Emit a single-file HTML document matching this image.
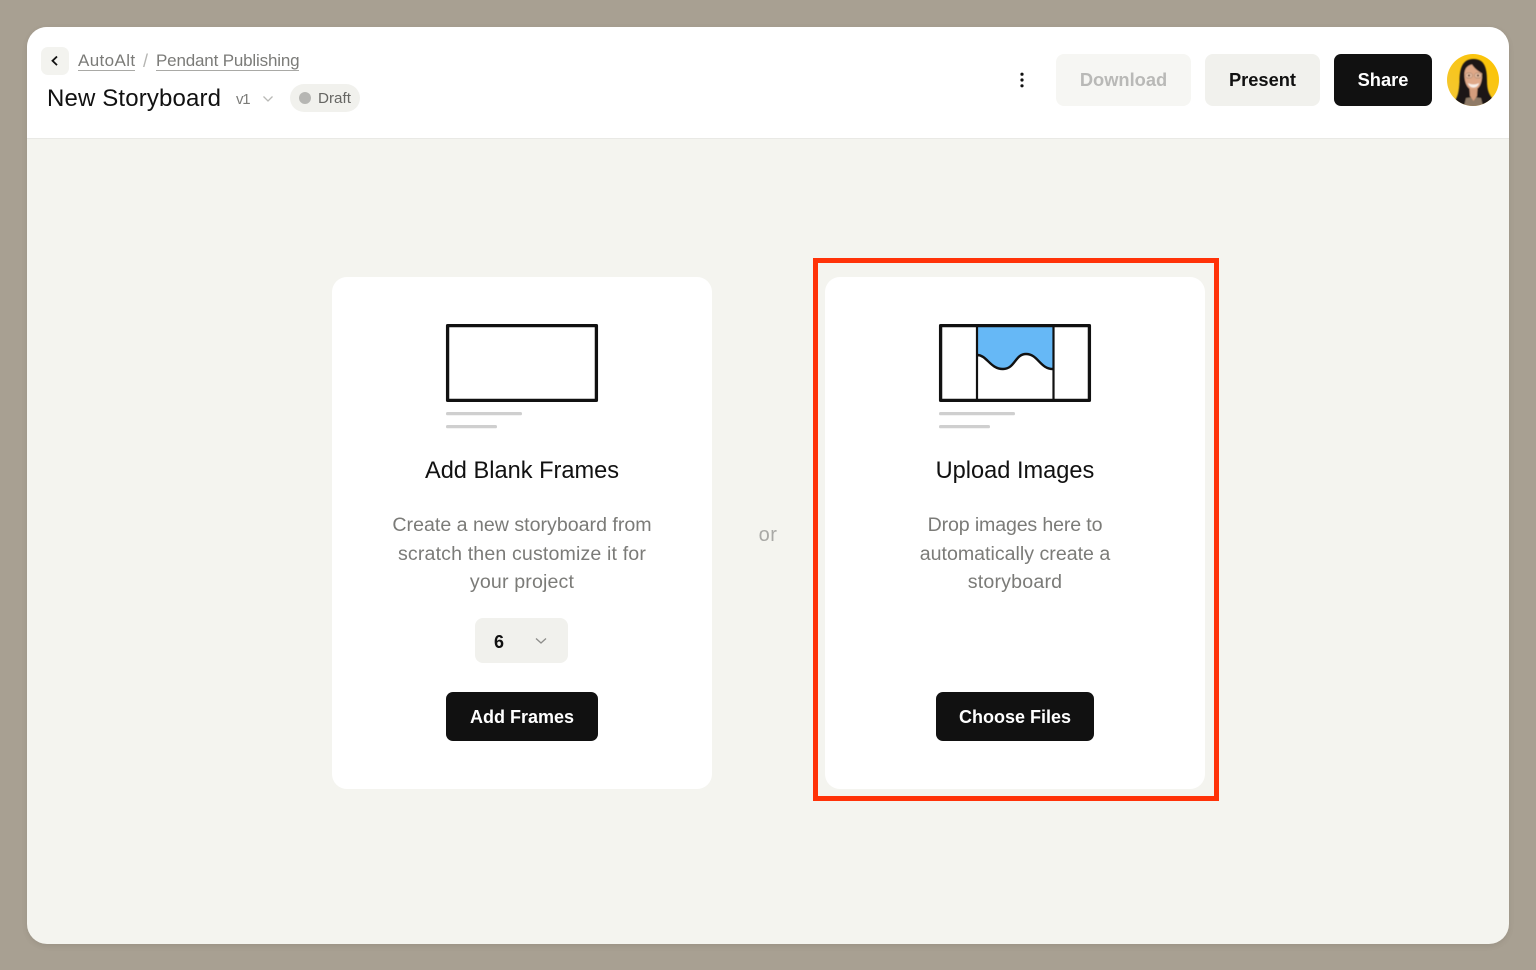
<!DOCTYPE html>
<html lang="en">
<head>
<meta charset="utf-8">
<title>New Storyboard</title>
<style>
html,body{margin:0;padding:0;width:1536px;height:970px;overflow:hidden;background:#a8a092;font-family:"Liberation Sans",sans-serif;}
*{box-sizing:border-box;}
.abs{position:absolute;}
.win{position:absolute;left:27px;top:27px;width:1482px;height:917px;background:#f4f4ef;border-radius:20px;overflow:hidden;box-shadow:0 2px 6px rgba(60,50,40,.12);}
.t{position:absolute;white-space:nowrap;line-height:1;}
.btn{position:absolute;display:flex;align-items:center;justify-content:center;font-weight:700;font-size:18.3px;white-space:nowrap;}
.dark{background:#111;color:#fff;border-radius:7px;}
.card{position:absolute;top:277px;width:380px;height:512px;background:#fff;border-radius:15px;}
.ctr{position:absolute;text-align:center;white-space:nowrap;left:0;width:380px;}
.title{font-size:23.6px;line-height:26px;color:#111;}
.desc{font-size:19.6px;color:#7b7b78;}
.desc div{position:absolute;left:0;width:380px;line-height:28px;}
a{color:inherit;text-decoration:none;border-bottom:1px solid #a9a9a6;}
</style>
</head>
<body>
<div class="win"></div>
<div class="abs" style="left:27px;top:27px;width:1482px;height:112px;background:#fff;border-bottom:1px solid #e9e9e5;border-radius:20px 20px 0 0;"></div>

<div class="abs" style="left:41px;top:47px;width:28px;height:28px;border-radius:7px;background:#f3f3ef;"></div>
<svg class="abs" style="left:41px;top:47px" width="28" height="28" viewBox="0 0 28 28"><path d="M16 9.500 L11.500 13.800 L16 18.100" fill="none" stroke="#111" stroke-width="1.800"/></svg>

<div class="t" style="left:78px;top:52px;font-size:17px;line-height:18px;color:#7b7b78;letter-spacing:.38px;"><a>AutoAlt</a></div>
<div class="t" style="left:143px;top:52px;font-size:18px;line-height:18px;color:#b5b5b2;">/</div>
<div class="t" style="left:156px;top:52px;font-size:17px;line-height:18px;color:#7b7b78;letter-spacing:-.17px;"><a>Pendant Publishing</a></div>

<div class="t" style="left:47px;top:85px;font-size:24px;line-height:27px;color:#111;letter-spacing:.15px;">New Storyboard</div>
<div class="t" style="left:236px;top:91px;font-size:15px;line-height:17px;color:#7b7b78;letter-spacing:-1.200px;">v1</div>
<svg class="abs" style="left:261px;top:94px" width="14" height="10" viewBox="0 0 14 10"><path d="M2.500 2.500 L7 7 L11.500 2.500" fill="none" stroke="#b9b9b6" stroke-width="1.300"/></svg>
<div class="abs" style="left:290px;top:84px;width:70px;height:28px;border-radius:14px;background:#f1f1ed;"></div>
<div class="abs" style="left:299px;top:92px;width:12px;height:12px;border-radius:50%;background:#b6b6b3;"></div>
<div class="t" style="left:318px;top:90px;font-size:15.200px;line-height:17px;color:#666663;">Draft</div>

<svg class="abs" style="left:1012px;top:70px" width="20" height="20" viewBox="0 0 20 20"><circle cx="10" cy="4.200" r="1.600" fill="#111"/><circle cx="10" cy="10" r="1.600" fill="#111"/><circle cx="10" cy="15.800" r="1.600" fill="#111"/></svg>

<div class="btn" style="left:1056px;top:54px;width:135px;height:52px;border-radius:8px;background:#f6f6f3;color:#b9b9b7;">Download</div>
<div class="btn" style="left:1205px;top:54px;width:115px;height:52px;border-radius:8px;background:#f1f1ed;color:#111;">Present</div>
<div class="btn dark" style="left:1334px;top:54px;width:98px;height:52px;">Share</div>

<svg class="abs" style="left:1447px;top:54px" width="52" height="52" viewBox="0 0 52 52">
<defs><clipPath id="av"><circle cx="26" cy="26" r="26"/></clipPath>
<linearGradient id="yl" x1="0" y1="1" x2="1" y2="0"><stop offset="0" stop-color="#f3c736"/><stop offset="1" stop-color="#fdc400"/></linearGradient>
<filter id="sf" x="-5%" y="-5%" width="110%" height="110%"><feGaussianBlur stdDeviation=".5"/></filter></defs>
<g clip-path="url(#av)">
<rect width="52" height="52" fill="url(#yl)"/>
<g filter="url(#sf)">
<path d="M6 49 C11 44 12 37 12.500 28 C12.500 15 15 5 26.500 5 C38 5 40 15 40 27 C40 36 42 42 48 47 L44 56 L8 56 Z" fill="#1b1512"/>
<path d="M17.500 19 C18 13 22 11 25 10.500 C27 14 31 17 35 19.500 C35.500 29 32 36 26.500 36 C21 36 17 29 17.500 19 Z" fill="#dfa888"/>
<path d="M21 29 C24 31 29 31 32 29 C31 33 28 33.500 26.500 33.500 C25 33.500 22 33 21 29 Z" fill="#f7eee8"/>
<rect x="18.500" y="19" width="7" height="5" rx="2.400" fill="#e4b89c" stroke="#a98973" stroke-width=".7"/>
<rect x="27.500" y="19" width="7" height="5" rx="2.400" fill="#e4b89c" stroke="#a98973" stroke-width=".7"/>
<circle cx="22" cy="21.500" r="1" fill="#3a2a22"/><circle cx="31" cy="21.500" r="1" fill="#3a2a22"/>
<path d="M19 44 L26 43 L34 44 L37 56 L16 56 Z" fill="#8f7a66"/>
<path d="M22.500 35 L30.500 35 L30 42 L26.500 47 L23 42 Z" fill="#d59d7c"/>
</g>
</g>
</svg>

<div class="card" style="left:332px;">
<svg class="abs" style="left:0;top:0" width="380" height="160" viewBox="0 0 380 160">
<rect x="115.600" y="48.600" width="148.800" height="74.800" fill="none" stroke="#111" stroke-width="3.300" stroke-linejoin="round"/>
<rect x="114" y="135" width="76" height="3.300" rx="1.600" fill="#cfcfcf"/>
<rect x="114" y="148" width="51" height="3.300" rx="1.600" fill="#cfcfcf"/>
</svg>
<div class="ctr title" style="top:181px;">Add Blank Frames</div>
<div class="ctr desc" style="top:234px;height:84px;">
<div style="top:0">Create a new storyboard from</div>
<div style="top:29px;letter-spacing:.14px">scratch then customize it for</div>
<div style="top:57px;letter-spacing:.15px">your project</div>
</div>
<div class="abs" style="left:143px;top:341px;width:93px;height:45px;border-radius:8px;background:#f1f1ed;"></div>
<div class="t" style="left:162px;top:355px;font-size:18px;line-height:20px;font-weight:700;color:#111;">6</div>
<svg class="abs" style="left:202px;top:359px" width="14" height="10" viewBox="0 0 14 10"><path d="M2 2.500 L7 7 L12 2.500" fill="none" stroke="#8d8d8a" stroke-width="1.300"/></svg>
<div class="btn dark" style="left:114px;top:415px;width:152px;height:49px;font-size:18px;padding-top:2px;">Add Frames</div>
</div>

<div class="ctr" style="left:578px;top:524px;font-size:20px;line-height:22px;color:#a9a9a6;letter-spacing:.5px;">or</div>

<div class="card" style="left:825px;">
<svg class="abs" style="left:0;top:0" width="380" height="160" viewBox="0 0 380 160">
<path d="M152 47 H228 V92 C215 92 213 77 201 77 C190 77 190 92 178 92 C165 92 162 78 152 78 Z" fill="#66b8f6"/>
<path d="M152 78 C162 78 165 92 178 92 C190 92 190 77 201 77 C213 77 215 92 228 92" fill="none" stroke="#111" stroke-width="2.400"/>
<rect x="115.600" y="48.600" width="148.800" height="74.800" fill="none" stroke="#111" stroke-width="3.300" stroke-linejoin="round"/>
<path d="M152 47 V124 M228.500 47 V124" stroke="#111" stroke-width="2.200" fill="none"/>
<rect x="114" y="135" width="76" height="3.300" rx="1.600" fill="#cfcfcf"/>
<rect x="114" y="148" width="51" height="3.300" rx="1.600" fill="#cfcfcf"/>
</svg>
<div class="ctr title" style="top:181px;">Upload Images</div>
<div class="ctr desc" style="top:234px;height:84px;">
<div style="top:0;letter-spacing:-.15px">Drop images here to</div>
<div style="top:29px">automatically create a</div>
<div style="top:57px;letter-spacing:.2px">storyboard</div>
</div>
<div class="btn dark" style="left:111px;top:415px;width:158px;height:49px;font-size:18px;padding-top:2px;">Choose Files</div>
</div>

<div class="abs" style="left:813px;top:258px;width:406px;height:543px;border:5.500px solid #ff3208;"></div>
</body>
</html>
